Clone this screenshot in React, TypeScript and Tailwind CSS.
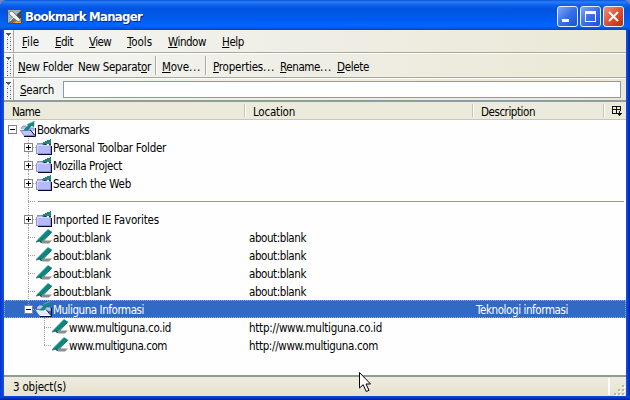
import React, { ReactNode, useLayoutEffect, useRef, useState } from "react";

// Text fitted to a fixed advance width through letter spacing.
function Label({ text, w, k = -1, className = "" }: { text: string; w: number; k?: number; className?: string }) {
  const ref = useRef<HTMLSpanElement>(null);
  const [spacing, setSpacing] = useState(0);
  useLayoutEffect(() => {
    if (ref.current) setSpacing((w - ref.current.getBoundingClientRect().width) / text.length);
  }, [w, text]);
  return (
    <span ref={ref} className={"inline-block shrink-0 whitespace-pre " + className} style={{ letterSpacing: spacing }}>
      {k < 0 ? text : <>{text.slice(0, k)}<span className="underline underline-offset-1 decoration-1">{text[k]}</span>{text.slice(k + 1)}</>}
    </span>
  );
}

function Grip({ h }: { h: number }) {
  const dots: number[] = [];
  for (let y = 7; y < h - 1; y += 2) dots.push(y);
  return (
    <svg width="10" height={h} className="shrink-0" shapeRendering="crispEdges">
      <path d={`M0 0H9V${h}H0Z`} fill="#f6f7f4" />
      <path d={`M9.5 0V${h}`} stroke="#a6a69c" />
      <path d="M2 3h5v1h-1v1h-1v1h-1v-1h-1v-1h-1z" fill="#4c5870" />
      {dots.map((y, i) => (
        <rect key={y} x={i % 2 ? 3 : 6} y={y} width="1" height="1" fill="#3d4d78" />
      ))}
      {dots.map((y, i) => (
        <rect key={y} x={i % 2 ? 6 : 3} y={y} width="1" height="1" fill="#aab4cc" />
      ))}
    </svg>
  );
}

function Bar({ h, children, className = "" }: { h: string; children: ReactNode; className?: string }) {
  return <div className={`flex shrink-0 items-center bg-linear-to-r from-[#f3f5f3] via-[#efeee5] to-[#ebe8d5] ${h} ${className}`}>{children}</div>;
}

function FolderIcon({ open = false, selected = false }: { open?: boolean; selected?: boolean }) {
  return open ? (
    <svg width="16" height="16" className="shrink-0">
      <path d="M1.5 8V6.5L3 5H6L7 7H14V10" fill="#b9bdf0" stroke={selected ? "#c9ccf4" : "#8a8fc8"} />
      <path d="M.5 9.5H11L14.5 14.5H4Z" fill={selected ? "#e4e7ff" : "#c0c4fa"} stroke={selected ? "#ffffff" : "#8589c4"} />
      <path d="M4 15.5H15.5V7" stroke="#090938" fill="none" />
      <path d="M3 9.5L8 4.5L6.5 3.5L14.5 0L14 6L11.5 5L8 9.5Z" fill="#16857b" />
      <path d="M10 8.5L15 14.5" stroke="#161b45" fill="none" />
      <path d="M7 3.5L14.5 .3" stroke="#74b5b0" fill="none" strokeWidth=".8" />
    </svg>
  ) : (
    <svg width="16" height="16" shapeRendering="crispEdges" className="shrink-0">
      <path d="M.5 7L2 4.5H6L7.5 6H14.5V14.5H.5Z" fill="#b5baf8" stroke="#8f94cc" />
      <path d="M1 6.5h12M1.5 7v7" stroke="#d4d6ff" />
      <path d="M2 15.5h13M15.5 7v9" stroke="#08083e" />
      <path d="M6 4.5L8 3L15 0V5H12L10 6H8Z" fill="#258578" />
      <path d="M8 5.5h2M13 5.5h2" stroke="#183b45" />
    </svg>
  );
}

function MarkIcon() {
  return (
    <svg width="17" height="16" className="shrink-0">
      <path d="M8 11.5H16L13 14.5H6Z" fill="#8d8d8d" />
      <path d="M0 12.5L12 .3L16 2.8L6 12.5L5 14.5L4 12.2Z" fill="#07877d" />
      <path d="M1 11.5L12 .5" stroke="#4ba59d" strokeWidth=".7" fill="none" />
      <path d="M15.7 3.2L5.5 14L4.2 12L0 13" stroke="#123f3d" strokeWidth=".8" fill="none" />
    </svg>
  );
}

function Twisty({ open }: { open: boolean }) {
  return (
    <svg width="9" height="9" shapeRendering="crispEdges" className="shrink-0">
      <rect x=".5" y=".5" width="8" height="8" fill="white" stroke="#858585" />
      <path d={open ? "M2 4.5h5" : "M2 4.5h5M4.5 2v5"} stroke="black" />
    </svg>
  );
}

type Item = { name: string; w: number; level: number; kind: "open" | "closed" | "mark"; loc?: string; lw?: number; desc?: string; last?: boolean };

const items: (Item | null)[] = [
  { name: "Bookmarks", w: 52, level: 0, kind: "open" },
  { name: "Personal Toolbar Folder", w: 113, level: 1, kind: "closed" },
  { name: "Mozilla Project", w: 69, level: 1, kind: "closed" },
  { name: "Search the Web", w: 78, level: 1, kind: "closed" },
  null,
  { name: "Imported IE Favorites", w: 106, level: 1, kind: "closed" },
  ...[0, 1, 2, 3].map((): Item => ({ name: "about:blank", w: 58, level: 1, kind: "mark", loc: "about:blank", lw: 57 })),
  { name: "Muliguna Informasi", w: 91, level: 1, kind: "open", desc: "Teknologi informasi", last: true },
  { name: "www.multiguna.co.id", w: 102, level: 2, kind: "mark", loc: "http://www.multiguna.co.id", lw: 133 },
  { name: "www.multiguna.com", w: 98, level: 2, kind: "mark", loc: "http://www.multiguna.com", lw: 129, last: true },
];

// Dotted connector for one row of the tree.
function Branch({ last }: { last?: boolean }) {
  return (
    <svg width="9" height="18" shapeRendering="crispEdges" className="shrink-0">
      <path d={last ? "M1.5 0V10M1 9.5H8" : "M1.5 0V18M1 9.5H8"} stroke="#a0a0a0" strokeDasharray="1 1" fill="none" />
    </svg>
  );
}

function Row({ item }: { item: Item | null }) {
  if (!item)
    return (
      <div className="flex h-[18px] items-center pl-[23px]">
        <Branch /><div className="mt-px mr-[2px] ml-[2px] h-px grow bg-[#999a88]" />
      </div>
    );
  const sel = !!item.desc;
  return (
    <div className={`flex h-[18px] items-center ${sel ? "bg-[#316ac5] text-white outline-1 -outline-offset-1 outline-dotted outline-[#8fb0df]" : ""}`}>
      <div className="flex w-[244px] shrink-0 items-center">
        {item.level === 0 && <div className="flex w-[16px] pl-[4px]"><Twisty open /></div>}
        {item.level === 1 && (
          <div className="flex w-[32px] items-center pl-[20px]">
            {item.kind === "mark" ? <div className="flex pl-[3px]"><Branch /></div> : (
              <>
                <div className="flex h-[18px] w-[9px] flex-col items-center">
                  <div className="h-[5px] w-px border-l border-dotted border-[#a9a9a9]" />
                  <Twisty open={item.kind === "open"} />
                  {!item.last && <div className="h-[4px] w-px border-l border-dotted border-[#a9a9a9]" />}
                </div>
                <div className="w-[3px] border-t border-dotted border-[#a9a9a9]" />
              </>
            )}
          </div>
        )}
        {item.level === 2 && <div className="flex w-[48px] pl-[39px]"><Branch last={item.last} /></div>}
        {item.kind === "mark" ? <MarkIcon /> : <FolderIcon open={item.kind === "open"} selected={sel} />}
        <Label text={item.name} w={item.w} className={item.kind === "mark" ? "pt-[2px]" : "ml-px pt-[2px]"} />
      </div>
      <div className="w-[228px] shrink-0 pl-px">{item.loc && <Label text={item.loc} w={item.lw ?? 58} className="pt-[2px]" />}</div>
      {item.desc && <Label text={item.desc} w={92} className="pt-[2px]" />}
    </div>
  );
}

function WinButton({ children, close = false }: { children: ReactNode; close?: boolean }) {
  return (
    <div className={`flex size-[21px] items-center justify-center rounded-[3px] border border-[#e8effc] ${close ? "bg-linear-to-br from-[#ed9272] via-[#df5030] to-[#b92c0a]" : "bg-linear-to-br from-[#7ea7f4] via-[#3a6ee9] to-[#1c50d1]"}`}>
      <svg width="19" height="19" shapeRendering={close ? "auto" : "crispEdges"}>{children}</svg>
    </div>
  );
}

const Divider = ({ className = "" }: { className?: string }) => <div className={"h-[19px] w-[2px] shrink-0 border-r border-white bg-[#aaa99a] " + className} />;

export default function App() {
  return (
    <div className="relative flex h-[400px] w-[630px] flex-col overflow-hidden bg-[#7685b8] font-['DejaVu_Sans_Condensed','DejaVu_Sans',sans-serif] text-[11.5px] leading-[14px] text-black">
      <div className="flex h-[400px] flex-col rounded-t-[7px] bg-[linear-gradient(90deg,#0831c8_0,#0f55ea_4px,#0f55ea_626px,#0020a8_630px)]">
        <div className="flex h-[30px] shrink-0 items-center rounded-t-[7px] bg-[linear-gradient(#0757d8_0,#2c7cf5_2px,#0b62ee_5px,#0053df_9px,#005df2_20px,#0066ff_26px,#0048c6_30px)] pt-[3px] pr-[6px] pl-[7px]">
          <svg width="15" height="15" className="shrink-0">
            <path d="M0 0H15V15H0Z" fill="#60707c" />
            <path d="M1 1H14L1 14Z" fill="#a5b2ba" />
            <path d="M5 14L14 5V14Z" fill="#e45b23" />
            <path d="M7 14L14 9V14Z" fill="#ffae2d" />
            <path d="M10 6L14 2V9L10 11Z" fill="#39495a" />
            <path d="M2 3L5 2L13 10V13L10 12L2 5Z" fill="#f4f4ee" stroke="#354b5d" strokeWidth=".6" />
            <path d="M3 12L9 6" stroke="#e1e5e5" />
            <path d="M.5 .5H14.5V14.5H.5Z" stroke="#344e69" fill="none" />
          </svg>
          <Label text="Bookmark Manager" w={117} className="ml-[3px] pt-px text-[13px] leading-[16px] font-bold text-white [text-shadow:1px_1px_0_#05287c]" />
          <div className="ml-auto flex gap-[2px]">
            <WinButton><path d="M4 12h7v3H4z" fill="white" /></WinButton>
            <WinButton><path d="M4 4h11v11H4zM5 7v7h9V7z" fill="white" fillRule="evenodd" /></WinButton>
            <WinButton close><path d="M5 5l9 9M14 5l-9 9" stroke="white" strokeWidth="2" /></WinButton>
          </div>
        </div>
        <div className="mx-[4px] flex h-[366px] flex-col bg-white">
          <Bar h="h-[23px]" className="border-b border-[#aaa99d]">
            <Grip h={22} />
            <div className="flex gap-[16px] pt-[2px] pl-[8px]">
              <Label text="File" w={17} k={0} /><Label text="Edit" w={18} k={0} /><Label text="View" w={22} k={0} /><Label text="Tools" w={25} k={0} /><Label text="Window" w={38} k={0} /><Label text="Help" w={22} k={0} />
            </div>
          </Bar>
          <Bar h="h-[25px]" className="border-y border-t-white border-b-[#aaa99d]">
            <Grip h={23} />
            <div className="flex items-center pl-[4px]">
              <Label text="New Folder" w={55} k={0} className="pt-[3px]" />
              <Label text="New Separator" w={73} k={11} className="ml-[5px] pt-[3px]" />
              <Divider className="ml-[4px]" />
              <Label text="Move" w={27} k={0} className="ml-[5px] pt-[3px]" /><Label text="..." w={12} className="pt-[3px]" />
              <Divider className="ml-[4px]" />
              <Label text="Properties" w={50} k={0} className="ml-[6px] pt-[3px]" /><Label text="..." w={12} className="pt-[3px]" />
              <Label text="Rename" w={40} k={0} className="ml-[5px] pt-[3px]" /><Label text="..." w={12} className="pt-[3px]" />
              <Label text="Delete" w={32} k={0} className="ml-[5px] pt-[3px]" />
            </div>
          </Bar>
          <Bar h="h-[22px]" className="border-t border-white">
            <Grip h={21} />
            <Label text="Search" w={34} k={0} className="ml-[6px]" />
            <div className="mr-[5px] ml-[9px] h-[17px] grow border border-[#7f9db9] bg-white" />
          </Bar>
          <div className="flex h-[20px] shrink-0 items-center border-t-2 border-b border-t-[#929b9d] border-b-[#cbc7b8] bg-[#ebeadb]">
            <Label text="Name" w={28} className="ml-[8px] pt-[2px]" />
            <div className="ml-[204px] h-[13px] w-[2px] border-r border-white bg-[#c7c5b2]" />
            <Label text="Location" w={42} className="ml-[7px] pt-[2px]" />
            <div className="ml-[177px] h-[13px] w-[2px] border-r border-white bg-[#c7c5b2]" />
            <Label text="Description" w={54} className="ml-[7px] pt-[2px]" />
            <div className="ml-auto h-[13px] w-[2px] border-r border-white bg-[#c7c5b2]" />
            <svg width="21" height="14" shapeRendering="crispEdges">
              <path d="M7 2h9v5h-1V6H8v3h3v1H7zM8 3v2h3V3zM12 3v2h3V3zM11 6h1v4h-1z" fill="#111" fillRule="evenodd" />
              <path d="M14 7h1v2h2v1h-1v1h-1v1h-1v-1h-1v-1h-1V9h2z" fill="#111" />
            </svg>
          </div>
          <div className="h-[255px] shrink-0 bg-[#fefefe]">
            {items.map((item, i) => <Row key={i} item={item} />)}
          </div>
          <div className="flex h-[21px] shrink-0 items-center border-t-2 border-[#929b91] bg-linear-to-b from-[#eeecdf] via-[#ebe8d8] to-[#e4e0cc]">
            <Label text="3 object(s)" w={53} className="ml-[9px]" />
            <div className="ml-auto h-[17px] w-[2px] bg-white" />
            <svg width="16" height="19" shapeRendering="crispEdges">
              {[[12, 8], [8, 12], [12, 12], [4, 16], [8, 16], [12, 16]].map(([x, y]) => (
                <g key={`${x}-${y}`}><rect x={x + 1} y={y + 1} width="2" height="2" fill="white" /><rect x={x} y={y} width="2" height="2" fill="#b8b4a2" /></g>
              ))}
            </svg>
          </div>
        </div>
        <div className="h-[4px] bg-linear-to-b from-[#0f4de0] to-[#001f9c]" />
      </div>
      <svg width="13" height="22" className="absolute top-[372px] left-[359px]">
        <path d="M.5 .5V16L4.2 12.7L7.2 19.5L10 18.3L7 12H11.5Z" fill="white" stroke="black" />
      </svg>
    </div>
  );
}
